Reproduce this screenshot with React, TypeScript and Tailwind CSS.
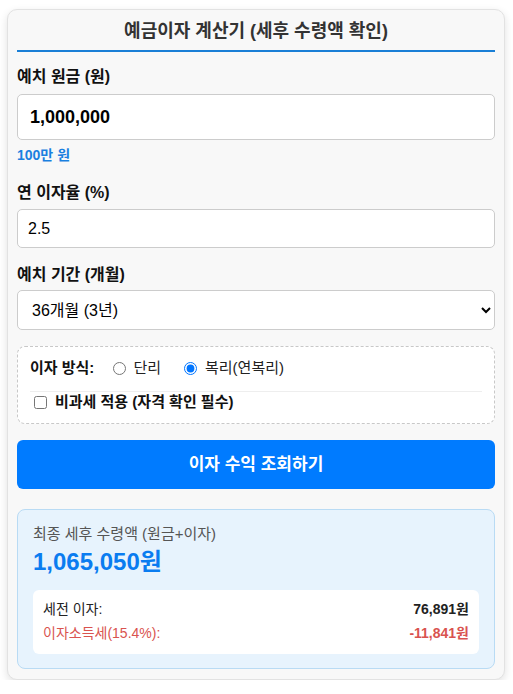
import { useState } from 'react'

const font = { fontFamily: '"Liberation Sans", "Noto Sans CJK KR", sans-serif' }

export default function App() {
 const [principal, setPrincipal] = useState('1,000,000')
 const [rate, setRate] = useState('2.5')
 const [months, setMonths] = useState('36')
 const [method, setMethod] = useState('compound')
 const [taxFree, setTaxFree] = useState(false)

 return (
  <div className="pt-[9px] pl-[7px]" style={font}>
   <div className="w-[498px] rounded-[10px] border border-[#e2e2e2] bg-[#f8f8f8] px-[9px] pt-[10px] pb-[10px] shadow-[0_3px_8px_rgba(0,0,0,0.12)]">
    <h2 className="border-b-2 border-[#1a7fd6] pb-[8px] text-center text-[18px] leading-[22px] font-bold text-[#333]">
     예금이자 계산기 (세후 수령액 확인)
    </h2>

    <label className="mt-[15px] block text-[16px] leading-[20px] font-bold text-[#111]">
     예치 원금 (원)
    </label>
    <input
     className="mt-[7px] block h-[46px] w-full rounded-[5px] border border-[#ccc] bg-white px-[12px] text-[18px] font-bold text-black outline-none"
     value={principal}
     onChange={(e) => setPrincipal(e.target.value)}
    />
    <div className="mt-[6px] text-[14px] leading-[18px] font-bold text-[#1a80e0]">100만 원</div>

    <label className="mt-[19px] block text-[16px] leading-[20px] font-bold text-[#111]">
     연 이자율 (%)
    </label>
    <input
     className="mt-[6px] block h-[39px] w-full rounded-[5px] border border-[#ccc] bg-white px-[10px] text-[16px] text-black outline-none"
     value={rate}
     onChange={(e) => setRate(e.target.value)}
    />

    <label className="mt-[17px] block text-[16px] leading-[20px] font-bold text-[#111]">
     예치 기간 (개월)
    </label>
    <select
     className="mt-[5px] block h-[40px] w-full rounded-[5px] border border-[#ccc] bg-white px-[10px] text-[16px] text-black outline-none"
     style={font}
     value={months}
     onChange={(e) => setMonths(e.target.value)}
    >
     <option value="12">12개월 (1년)</option>
     <option value="24">24개월 (2년)</option>
     <option value="36">36개월 (3년)</option>
    </select>

    <div className="mt-[16px] rounded-[8px] border border-dashed border-[#c8c8c8] bg-white px-[12px] pt-[11px] pb-[11px]">
     <div className="flex items-center text-[15px] leading-[20px]">
      <span className="mr-[19px] font-bold text-[#111]">이자 방식:</span>
      <label className="flex items-center">
       <input
        type="radio"
        className="m-0 h-[13px] w-[13px]"
        checked={method === 'simple'}
        onChange={() => setMethod('simple')}
       />
       <span className="ml-[7px] text-[#222]">단리</span>
      </label>
      <label className="ml-[23px] flex items-center">
       <input
        type="radio"
        className="m-0 h-[13px] w-[13px]"
        checked={method === 'compound'}
        onChange={() => setMethod('compound')}
       />
       <span className="ml-[8px] text-[#222]">복리(연복리)</span>
      </label>
     </div>
     <label className="mt-[13px] flex items-center border-t border-[#eee] pl-[4px] text-[15px] leading-[20px]">
      <input
       type="checkbox"
       className="m-0 h-[13px] w-[13px]"
       checked={taxFree}
       onChange={(e) => setTaxFree(e.target.checked)}
      />
      <span className="ml-[8px] font-bold text-[#111]">비과세 적용 (자격 확인 필수)</span>
     </label>
    </div>

    <button className="mt-[16px] block h-[49px] w-full rounded-[6px] bg-[#007bff] text-[17px] font-bold text-white">
     이자 수익 조회하기
    </button>

    <div className="mt-[20px] rounded-[8px] border border-[#b9dbf4] bg-[#e7f3fd] px-[15px] pt-[14px] pb-[14px]">
     <div className="text-[15px] leading-[20px] text-[#555]">최종 세후 수령액 (원금+이자)</div>
     <div className="mt-[4px] text-[24px] leading-[28px] font-bold text-[#0a7cf0]">1,065,050원</div>
     <div className="mt-[14px] rounded-[6px] bg-white px-[10px] pt-[9px] pb-[11px] text-[14px] leading-[20px]">
      <div className="flex justify-between text-[#222]">
       <span>세전 이자:</span>
       <span className="font-bold">76,891원</span>
      </div>
      <div className="mt-[4px] flex justify-between text-[#d9534f]">
       <span>이자소득세(15.4%):</span>
       <span className="font-bold">-11,841원</span>
      </div>
     </div>
    </div>
   </div>
  </div>
 )
}
